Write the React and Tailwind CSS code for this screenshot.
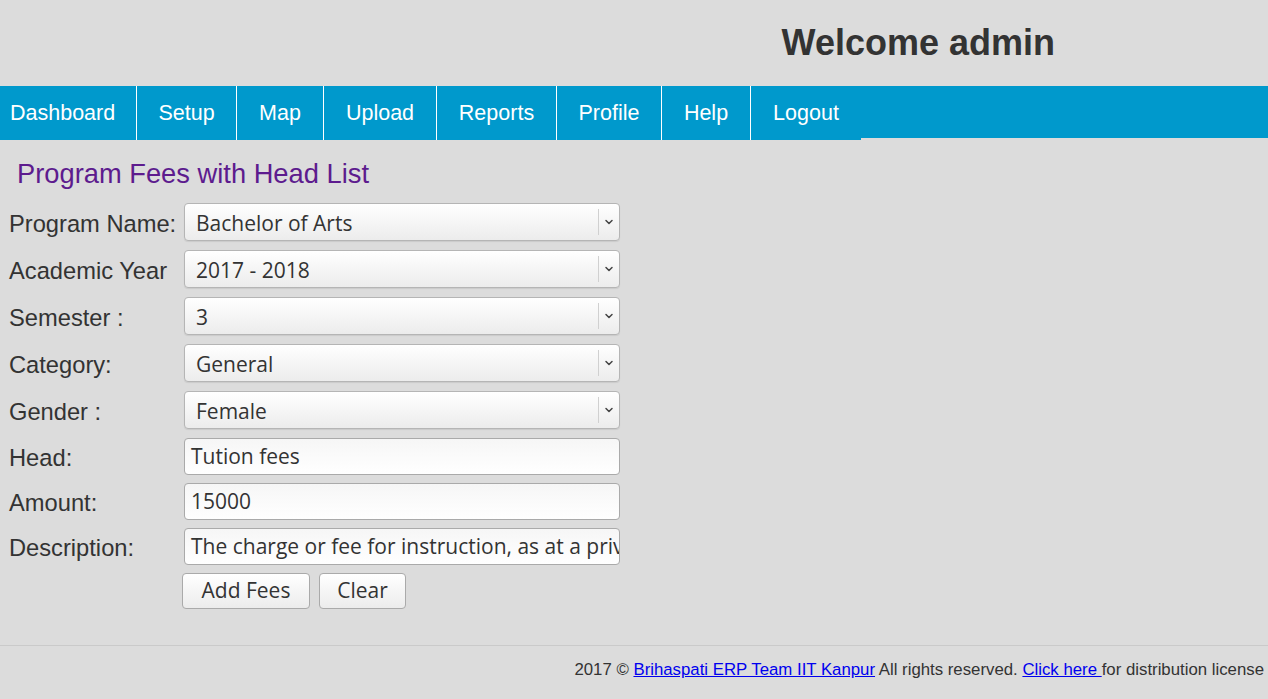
import { ChevronDown } from "lucide-react"

const navItems = [
  { label: "Dashboard", w: "w-[137px]", first: true },
  { label: "Setup", w: "w-[100px]" },
  { label: "Map", w: "w-[87px]" },
  { label: "Upload", w: "w-[113px]" },
  { label: "Reports", w: "w-[120px]" },
  { label: "Profile", w: "w-[105px]" },
  { label: "Help", w: "w-[89px]" },
  { label: "Logout", w: "w-[110px]", last: true },
]

const selects = [
  { label: "Program Name:", value: "Bachelor of Arts" },
  { label: "Academic Year", value: "2017 - 2018" },
  { label: "Semester :", value: "3" },
  { label: "Category:", value: "General" },
  { label: "Gender :", value: "Female" },
]

const inputs = [
  { label: "Head:", value: "Tution fees" },
  { label: "Amount:", value: "15000" },
  { label: "Description:", value: "The charge or fee for instruction, as at a private school or a college or university." },
]

const uiFont = { fontFamily: '"Liberation Sans", Arial, sans-serif' }
const fieldFont = { fontFamily: '"Open Sans", "Noto Sans", sans-serif' }

function SelectBox({ value }) {
  return (
    <div className="flex h-[38px] w-[436px] items-center rounded-[4px] border border-[#b5b5b5] bg-gradient-to-b from-white to-[#ececec] shadow-[0_1px_1px_rgba(0,0,0,0.08)]">
      <span className="flex-1 translate-y-[1px] pl-[11px] text-[21px] leading-[28px] text-[#333]" style={fieldFont}>
        {value}
      </span>
      <div className="flex h-[26px] w-[21px] items-center justify-center border-l border-[#d0d0d0]">
        <ChevronDown className="h-[12px] w-[12px] text-[#444]" strokeWidth={3} />
      </div>
    </div>
  )
}

export default function App() {
  return (
    <div className="min-h-[699px] bg-[#dcdcdc] text-[#333]" style={uiFont}>
      <div className="flex h-[86px] items-center justify-end pr-[213px]">
        <h1 className="text-[36px] font-bold text-[#333]">Welcome admin</h1>
      </div>

      <nav className="h-[52px] bg-[#0099cc]">
        <ul className="flex">
          {navItems.map((item) => (
            <li
              key={item.label}
              className={`${item.w} flex h-[54px] items-center bg-[#0099cc] text-[21.5px] text-white ${
                item.last ? "" : "border-r border-white"
              } ${item.first ? "pl-[10px]" : "justify-center"}`}
            >
              {item.label}
            </li>
          ))}
        </ul>
      </nav>

      <div className="pl-[9px]">
        <h2 className="mt-[19px] pl-[8px] text-[27.3px] leading-[34px] text-[#5d1b8e]">
          Program Fees with Head List
        </h2>

        <div className="mt-[12px] flex flex-col gap-[9px]">
          {selects.map((s) => (
            <div key={s.label} className="flex items-center">
              <label className="w-[175px] translate-y-[2px] text-[23.7px] leading-[30px]">{s.label}</label>
              <SelectBox value={s.value} />
            </div>
          ))}
        </div>

        <div className="mt-[9px] flex flex-col gap-[8px]">
          {inputs.map((s) => (
            <div key={s.label} className="flex items-center">
              <label className="w-[175px] translate-y-[1px] text-[23.7px] leading-[30px]">{s.label}</label>
              <div className="flex h-[37px] w-[436px] items-center overflow-hidden whitespace-nowrap rounded-[4px] border border-[#aaa] bg-gradient-to-b from-[#f6f6f6] to-white px-[6px] text-[21px] text-[#333]" style={fieldFont}>
                {s.value}
              </div>
            </div>
          ))}
        </div>

        <div className="mt-[8px] flex gap-[9px] pl-[173px]">
          <button className="h-[36px] w-[128px] rounded-[4px] border border-[#aaa] bg-gradient-to-b from-white to-[#ececec] text-[21px] text-[#333]" style={fieldFont}>
            Add Fees
          </button>
          <button className="h-[36px] w-[87px] rounded-[4px] border border-[#aaa] bg-gradient-to-b from-white to-[#ececec] text-[21px] text-[#333]" style={fieldFont}>
            Clear
          </button>
        </div>
      </div>

      <footer className="mt-[36px] border-t border-[#cacaca] pt-[11px] pr-[4px] text-right text-[16.8px] text-[#333]">
        2017 © <a href="#" className="text-[#0000ee] underline">Brihaspati ERP Team IIT Kanpur</a> All rights reserved.{" "}
        <a href="#" className="text-[#0000ee] underline">Click here </a>for distribution license
      </footer>
    </div>
  )
}
